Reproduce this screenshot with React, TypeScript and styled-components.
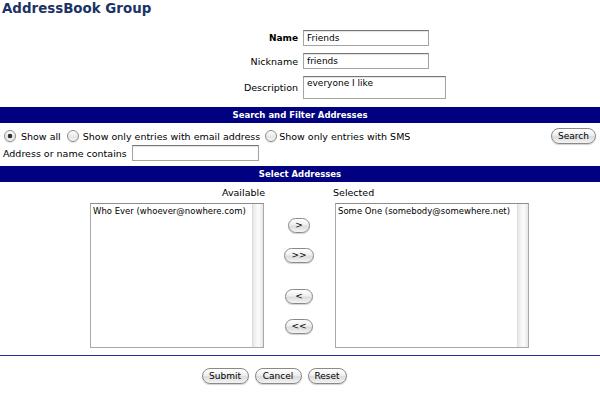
import React from "react";
import styled, { createGlobalStyle } from "styled-components";

const GlobalStyle = createGlobalStyle`
  html, body { margin: 0; padding: 0; background: #ffffff; }
  body {
    font-family: "DejaVu Sans", Verdana, sans-serif;
    font-size: 9.5px;
    color: #000000;
  }
`;

const Page = styled.div`
  width: 600px;
  height: 395px;
  overflow: hidden;
`;

const Title = styled.h1`
  margin: 0;
  height: 30px;
  padding: 1px 0 0 2px;
  box-sizing: border-box;
  font-size: 13.4px;
  line-height: 15px;
  font-weight: bold;
  color: #1b3366;
`;

const DetailsGrid = styled.div`
  display: grid;
  grid-template-columns: 298px 1fr;
  column-gap: 5px;
  row-gap: 7px;
  align-items: center;
`;

const FieldLabel = styled.label<{ $strong?: boolean }>`
  text-align: right;
  font-weight: ${(p) => (p.$strong ? "bold" : "normal")};
  font-size: ${(p) => (p.$strong ? "9px" : "9.5px")};
`;

const TextInput = styled.input<{ $w: number }>`
  width: ${(p) => p.$w}px;
  height: 16px;
  box-sizing: border-box;
  margin: 0;
  padding: 0 3px;
  border: 1px solid #a4a4a4;
  border-top-color: #777777;
  box-shadow: inset 0 1px 1px rgba(0, 0, 0, 0.12);
  font-family: "DejaVu Sans", Verdana, sans-serif;
  font-size: 9px;
  color: #000;
  background: #fff;
  outline: none;
`;

const TextArea = styled.textarea`
  width: 143px;
  height: 23px;
  box-sizing: border-box;
  margin: 0;
  padding: 1px 3px;
  border: 1px solid #a4a4a4;
  border-top-color: #777777;
  box-shadow: inset 0 1px 1px rgba(0, 0, 0, 0.12);
  font-family: "DejaVu Sans", Verdana, sans-serif;
  font-size: 9px;
  line-height: 11px;
  resize: none;
  overflow: hidden;
  outline: none;
`;

const SectionBar = styled.div<{ $top: number }>`
  margin-top: ${(p) => p.$top}px;
  height: 16px;
  background: #000080;
  color: #ffffff;
  font-weight: bold;
  font-size: 8.5px;
  line-height: 16px;
  text-align: center;
`;

const FilterArea = styled.div`
  padding: 5px 4px 0 3px;
`;

const FilterRow = styled.div`
  display: flex;
  align-items: center;
  justify-content: space-between;
  height: 16px;
`;

const RadioGroup = styled.div`
  display: flex;
  align-items: center;
`;

const RadioOption = styled.label<{ $gap: number; $after: number }>`
  display: flex;
  align-items: center;
  gap: ${(p) => p.$gap}px;
  margin-right: ${(p) => p.$after}px;
  white-space: nowrap;
`;

const Radio = styled.input.attrs({ type: "radio" })`
  appearance: none;
  -webkit-appearance: none;
  width: 12px;
  height: 12px;
  margin: 0 0 0 1px;
  border-radius: 50%;
  border: 1px solid #8e8e8e;
  box-sizing: border-box;
  background: linear-gradient(#ffffff, #e6e6e6 60%, #f4f4f4);
  box-shadow: 0 1px 1px rgba(0, 0, 0, 0.12);
  &:checked {
    background: radial-gradient(circle, #333333 0 2px, transparent 2.6px),
      linear-gradient(#ffffff, #e6e6e6 60%, #f4f4f4);
  }
`;

const SearchRow = styled.div`
  display: flex;
  align-items: center;
  gap: 5px;
  height: 16px;
  margin-top: 1px;
`;

const PillButton = styled.button<{ $w: number; $h?: number }>`
  width: ${(p) => p.$w}px;
  height: ${(p) => p.$h ?? 15}px;
  box-sizing: border-box;
  margin: 0;
  padding: 0;
  border: 1px solid #8a8a8a;
  border-radius: 8px;
  background: linear-gradient(#ffffff, #efefef 45%, #dcdcdc 55%, #f3f3f3);
  box-shadow: 0 1px 1px rgba(0, 0, 0, 0.18);
  font-family: "DejaVu Sans", Verdana, sans-serif;
  font-size: 9px;
  line-height: 1;
  color: #000;
`;

const SelectArea = styled.div`
  display: grid;
  grid-template-columns: 265px 68px 1fr;
  grid-template-rows: auto 145px;
  row-gap: 4px;
  padding-top: 5px;
`;

const ColumnLabel = styled.div<{ $align: "left" | "right" }>`
  text-align: ${(p) => p.$align};
  line-height: 12px;
`;

const ListBox = styled.div<{ $w: number; $side: "left" | "right" }>`
  width: ${(p) => p.$w}px;
  height: 145px;
  box-sizing: border-box;
  justify-self: ${(p) => (p.$side === "left" ? "end" : "start")};
  margin: ${(p) => (p.$side === "left" ? "0 1px 0 0" : "0 0 0 2px")};
  display: flex;
  border: 1px solid #a8a8a8;
  border-top-color: #8c8c8c;
  background: #ffffff;
`;

const ListItems = styled.div`
  flex: 1;
  min-width: 0;
  padding: 1px 1px 1px 2px;
  font-size: 8.5px;
  line-height: 12px;
  white-space: nowrap;
  overflow: hidden;
`;

const ScrollTrack = styled.div`
  flex: none;
  width: 10px;
  border-left: 1px solid #dddddd;
  background: linear-gradient(to right, #e8e8e8, #f8f8f8 40%, #fbfbfb 60%, #e6e6e6);
`;

const MoveColumn = styled.div`
  display: flex;
  flex-direction: column;
  align-items: center;
  padding-top: 15px;
`;

const MoveSlot = styled.div<{ $top: number }>`
  margin-top: ${(p) => p.$top}px;
  display: flex;
`;

const Rule = styled.hr`
  margin: 7px 0 0 0;
  border: 0;
  height: 1px;
  background: #2a2a9c;
`;

const Footer = styled.div`
  display: flex;
  justify-content: center;
  gap: 6px;
  padding-right: 52px;
  margin-top: 12px;
`;

export default function App() {
  return (
    <Page>
      <GlobalStyle />
      <Title>AddressBook Group</Title>
      <DetailsGrid>
        <FieldLabel $strong>Name</FieldLabel>
        <TextInput $w={126} defaultValue="Friends" />
        <FieldLabel>Nickname</FieldLabel>
        <TextInput $w={126} defaultValue="friends" />
        <FieldLabel>Description</FieldLabel>
        <TextArea defaultValue="everyone I like" />
      </DetailsGrid>

      <SectionBar $top={8}>Search and Filter Addresses</SectionBar>
      <FilterArea>
        <FilterRow>
          <RadioGroup>
            <RadioOption $gap={5} $after={5}>
              <Radio name="show" defaultChecked />
              Show all
            </RadioOption>
            <RadioOption $gap={4} $after={4}>
              <Radio name="show" />
              Show only entries with email address
            </RadioOption>
            <RadioOption $gap={2} $after={0}>
              <Radio name="show" />
              Show only entries with SMS
            </RadioOption>
          </RadioGroup>
          <PillButton $w={45} $h={16}>Search</PillButton>
        </FilterRow>
        <SearchRow>
          <span>Address or name contains</span>
          <TextInput $w={127} />
        </SearchRow>
      </FilterArea>

      <SectionBar $top={5}>Select Addresses</SectionBar>
      <SelectArea>
        <ColumnLabel $align="right">Available</ColumnLabel>
        <div />
        <ColumnLabel $align="left">Selected</ColumnLabel>

        <ListBox $w={174} $side="left">
          <ListItems>Who Ever (whoever@nowhere.com)</ListItems>
          <ScrollTrack />
        </ListBox>
        <MoveColumn>
          <MoveSlot $top={0}>
            <PillButton $w={22}>&gt;</PillButton>
          </MoveSlot>
          <MoveSlot $top={15}>
            <PillButton $w={30}>&gt;&gt;</PillButton>
          </MoveSlot>
          <MoveSlot $top={26}>
            <PillButton $w={28}>&lt;</PillButton>
          </MoveSlot>
          <MoveSlot $top={15}>
            <PillButton $w={28}>&lt;&lt;</PillButton>
          </MoveSlot>
        </MoveColumn>
        <ListBox $w={194} $side="right">
          <ListItems>Some One (somebody@somewhere.net)</ListItems>
          <ScrollTrack />
        </ListBox>
      </SelectArea>

      <Rule />
      <Footer>
        <PillButton $w={47} $h={16}>Submit</PillButton>
        <PillButton $w={47} $h={16}>Cancel</PillButton>
        <PillButton $w={39} $h={16}>Reset</PillButton>
      </Footer>
    </Page>
  );
}
